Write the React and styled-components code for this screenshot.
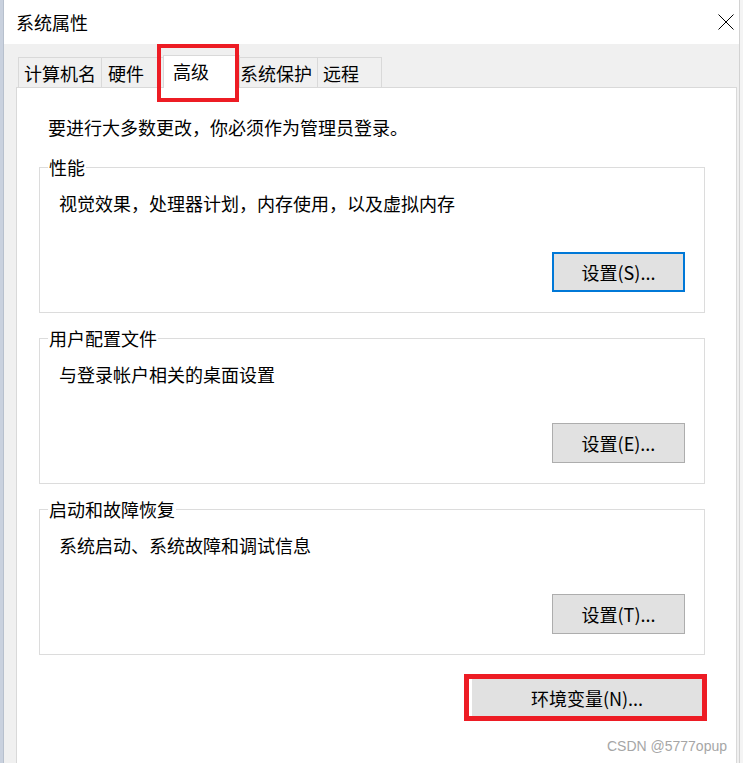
import React from "react";
import styled, { createGlobalStyle } from "styled-components";

const GlobalStyle = createGlobalStyle`
  html, body { margin: 0; padding: 0; }
  body {
    background: #f0f0f0;
    font-family: "Noto Sans CJK SC", "Noto Sans", sans-serif;
    color: #000;
  }
  * { box-sizing: border-box; }
`;

const Page = styled.div`
  width: 743px;
  height: 763px;
  display: flex;
  overflow: hidden;
  position: relative;
`;

const LeftStrip = styled.div`
  width: 4px;
  flex: none;
  background: #c9d1de;
  border-right: 1px solid #b7c0cd;
`;

const RightStrip = styled.div`
  width: 4px;
  flex: none;
  background: #f4f4f4;
  border-left: 1px solid #d2d2d2;
`;

const Window = styled.div`
  flex: 1;
  display: flex;
  flex-direction: column;
  min-width: 0;
`;

const TitleBar = styled.div`
  height: 44px;
  flex: none;
  background: #fff;
  display: flex;
  align-items: center;
  justify-content: space-between;
  padding: 0 5px 0 12px;
`;

const Title = styled.div`
  font-size: 18px;
  line-height: 20px;
`;

const CloseIcon = styled.svg`
  width: 16px;
  height: 16px;
  margin-top: -1px;
  display: block;
`;

const Body = styled.div`
  flex: 1;
  background: #f0f0f0;
  padding: 11px 2px 0 12px;
  display: flex;
  flex-direction: column;
  position: relative;
`;

const TabRow = styled.div`
  display: flex;
  align-items: flex-end;
  height: 32px;
  padding-left: 2px;
  flex: none;
`;

const Tab = styled.div`
  width: ${(p) => p.$w}px;
  height: ${(p) => (p.$active ? 33 : 30)}px;
  margin: ${(p) => (p.$active ? "0 -2px -1px -3px" : "0 0 0 -1px")};
  &:first-child { margin-left: 0; }
  padding-left: ${(p) => p.$pad}px;
  padding-top: 4px;
  border: 1px solid #d9d9d9;
  border-bottom: none;
  background: ${(p) => (p.$active ? "#fff" : "#f0f0f0")};
  font-size: 18px;
  line-height: 22px;
  white-space: nowrap;
  position: relative;
  z-index: ${(p) => (p.$active ? 1 : 0)};
`;

const TabHighlight = styled.div`
  position: absolute;
  left: 153px;
  top: 0;
  width: 82px;
  height: 58px;
  border: 4px solid #ed1c24;
  pointer-events: none;
  z-index: 3;
`;

const Panel = styled.div`
  flex: 1;
  background: #fff;
  border: 1px solid #d9d9d9;
  border-bottom: none;
  padding: 0 31px 0 22px;
  display: flex;
  flex-direction: column;
`;

const Intro = styled.div`
  margin: 27px 0 3px 9px;
  font-size: 18px;
  line-height: 24px;
`;

const Group = styled.fieldset`
  margin: 15px 0 0 0;
  padding: 0;
  border: 1px solid #dcdcdc;
  min-width: 0;
`;

const Legend = styled.legend`
  margin-left: 8px;
  padding: 0 1px;
  font-size: 18px;
  line-height: 20px;
`;

const GroupBody = styled.div`
  display: flex;
  flex-direction: column;
  padding: 14px 19px 20px 19px;
`;

const Desc = styled.div`
  font-size: 18px;
  line-height: 24px;
`;

const Button = styled.button`
  align-self: flex-end;
  margin-top: 37px;
  width: 133px;
  height: 40px;
  background: #e1e1e1;
  border: ${(p) => (p.$focused ? "2px solid #0078d7" : "1px solid #adadad")};
  font-family: inherit;
  font-size: 18px;
  line-height: 22px;
  color: #000;
  padding: 0;
`;

const EnvRow = styled.div`
  display: flex;
  justify-content: flex-end;
  margin: 19px -2px 0 0;
`;

const EnvHighlight = styled.div`
  border: 5px solid #ed1c24;
  padding-left: 3px;
  background: #fff;
  display: flex;
`;

const EnvButton = styled.button`
  width: 230px;
  height: 37px;
  border: none;
  background: #e1e1e1;
  font-family: inherit;
  font-size: 18px;
  line-height: 22px;
  color: #000;
  padding: 0;
`;

const Watermark = styled.div`
  position: absolute;
  right: 16px;
  bottom: 9px;
  font-family: "Liberation Sans", Arial, sans-serif;
  font-size: 14px;
  line-height: 16px;
  color: #a6a6a6;
  pointer-events: none;
`;

const tabs = [
  { label: "计算机名", w: 84, pad: 5 },
  { label: "硬件", w: 65, pad: 6 },
  { label: "高级", w: 77, pad: 9, active: true },
  { label: "系统保护", w: 81, pad: 2 },
  { label: "远程", w: 65, pad: 5 },
];

const groups = [
  { title: "性能", desc: "视觉效果，处理器计划，内存使用，以及虚拟内存", btn: "设置(S)...", focused: true },
  { title: "用户配置文件", desc: "与登录帐户相关的桌面设置", btn: "设置(E)..." },
  { title: "启动和故障恢复", desc: "系统启动、系统故障和调试信息", btn: "设置(T)..." },
];

export default function App() {
  return (
    <>
      <GlobalStyle />
      <Page>
        <LeftStrip />
        <Window>
          <TitleBar>
            <Title>系统属性</Title>
            <CloseIcon viewBox="0 0 16 16">
              <path d="M0.5 0.5 L15.5 15.5 M15.5 0.5 L0.5 15.5" stroke="#000" strokeWidth="1" fill="none" />
            </CloseIcon>
          </TitleBar>
          <Body>
            <TabRow>
              {tabs.map((t) => (
                <Tab key={t.label} $w={t.w} $pad={t.pad} $active={t.active}>
                  {t.label}
                </Tab>
              ))}
            </TabRow>
            <TabHighlight />
            <Panel>
              <Intro>要进行大多数更改，你必须作为管理员登录。</Intro>
              {groups.map((g) => (
                <Group key={g.title}>
                  <Legend>{g.title}</Legend>
                  <GroupBody>
                    <Desc>{g.desc}</Desc>
                    <Button $focused={g.focused}>{g.btn}</Button>
                  </GroupBody>
                </Group>
              ))}
              <EnvRow>
                <EnvHighlight>
                  <EnvButton>环境变量(N)...</EnvButton>
                </EnvHighlight>
              </EnvRow>
            </Panel>
          </Body>
        </Window>
        <RightStrip />
        <Watermark>CSDN @5777opup</Watermark>
      </Page>
    </>
  );
}
